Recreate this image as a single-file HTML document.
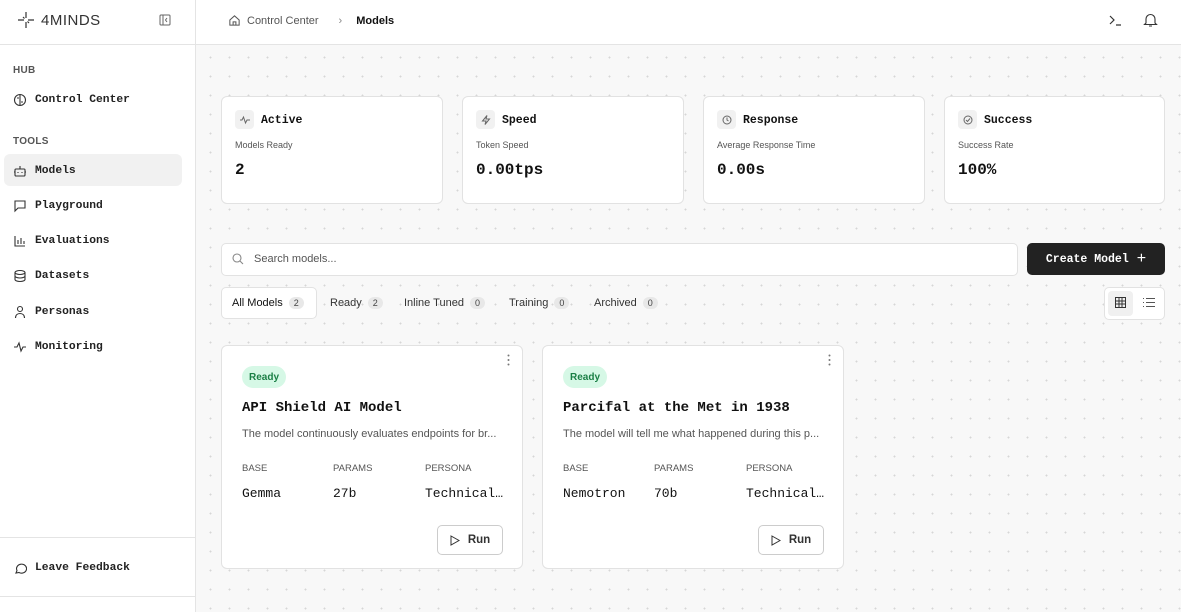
<!DOCTYPE html>
<html><head><meta charset="utf-8"><style>
*{box-sizing:border-box;margin:0;padding:0}
body{width:1181px;height:612px;overflow:hidden;font-family:"Liberation Sans",sans-serif;color:#111;background:#fff;position:relative}
.mono{font-family:"Liberation Mono",monospace}
.abs{position:absolute}
#side{left:0;top:0;width:196px;height:612px;border-right:1px solid #e4e4e4;background:#fff}
#main{left:196px;top:45px;width:985px;height:567px;background-color:#f8f8f8;background-image:radial-gradient(circle,#d6d6d6 0.8px,transparent 1.1px);background-size:19px 19px;background-position:5px 3px}
#hdr{left:196px;top:0;width:985px;height:45px;border-bottom:1px solid #e4e4e4;background:#fff}
.nav{position:absolute;left:13px;font-size:11.3px;font-weight:bold;color:#222;display:flex;align-items:center;gap:8px}
.nav svg{width:14px;height:14px}
.sec{position:absolute;left:13px;font-size:10px;font-weight:bold;color:#555;letter-spacing:.3px}
.card{position:absolute;background:#fff;border:1px solid #e2e2e2;border-radius:6px}
.stat .ic{position:absolute;left:13px;top:13px;width:19px;height:19px;border-radius:4px;background:#f1f1f1;display:flex;align-items:center;justify-content:center}
.stat .t{position:absolute;left:39px;top:17px;font-size:11.5px;font-weight:bold}
.stat .s{position:absolute;left:13px;top:43px;font-size:9px;color:#555}
.stat .v{position:absolute;left:13px;top:64px;font-size:16px;font-weight:bold}
.tab{position:absolute;top:297px;font-size:11px;color:#333;display:flex;align-items:center;gap:6px}
.badge{display:inline-block;background:#e8e8e8;border-radius:7px;font-size:9px;padding:1px 5px;color:#444}
.mc .rd{position:absolute;left:20px;top:20px;height:22px;width:44px;border-radius:11px;background:#d6f8e6;color:#1a7f45;font-size:10px;font-weight:bold;display:flex;align-items:center;justify-content:center}
.mc .tt{position:absolute;left:20px;top:54px;font-size:14px;font-weight:bold;white-space:nowrap}
.mc .d{position:absolute;left:20px;top:82px;font-size:11px;color:#555;white-space:nowrap}
.mc .l{position:absolute;top:117px;font-size:9.5px;color:#555}
.mc .val{position:absolute;top:140px;font-size:13px;white-space:nowrap}
.mc .run{position:absolute;left:215px;top:179px;width:66px;height:30px;border:1px solid #ccc;border-radius:5px;font-size:11.5px;font-weight:bold;display:flex;align-items:center;justify-content:center;gap:8px;color:#333}
.mc .dots{position:absolute;right:12px;top:8px;width:3px}
</style></head><body>
<div id="side" class="abs">
  <div class="abs" style="left:17px;top:11px;display:flex;align-items:center;gap:6px">
    <svg width="18" height="18" viewBox="0 0 18 18" fill="none" stroke="#333" stroke-width="1.2"><path d="M9 1v6M9 11v6M1 9h6M11 9h6M6 6l1.5 1.5M12 12l-1.5-1.5"/></svg>
    <span style="font-size:15px;color:#333;letter-spacing:.5px">4MINDS</span>
  </div>
  <svg class="abs" style="left:159px;top:14px" width="12" height="12" viewBox="0 0 12 12" fill="none" stroke="#666" stroke-width="1"><rect x="1" y="1" width="10" height="10" rx="1"/><path d="M4 1v10M8 4L6.5 6 8 8"/></svg>
  <div class="abs" style="left:0;top:44px;width:195px;border-top:1px solid #e4e4e4"></div>
  <div class="sec" style="top:65px">HUB</div>
  <div class="nav mono" style="top:93px"><svg viewBox="0 0 14 14" fill="none" stroke="#333" stroke-width="1.1"><circle cx="7" cy="7" r="5.5"/><path d="M7 1.5v11M4 5h2M8 9h2"/></svg>Control Center</div>
  <div class="sec" style="top:136px">TOOLS</div>
  <div class="abs" style="left:4px;top:154px;width:178px;height:32px;background:#f1f1f1;border-radius:6px"></div>
  <div class="nav mono" style="top:164px"><svg viewBox="0 0 14 14" fill="none" stroke="#333" stroke-width="1.1"><rect x="2" y="5" width="10" height="7" rx="1"/><path d="M7 2v3M1 8h1M12 8h1M5 8v1M9 8v1"/></svg>Models</div>
  <div class="nav mono" style="top:199px"><svg viewBox="0 0 14 14" fill="none" stroke="#333" stroke-width="1.1"><path d="M2 2h10v7H5l-3 3z"/></svg>Playground</div>
  <div class="nav mono" style="top:234px"><svg viewBox="0 0 14 14" fill="none" stroke="#333" stroke-width="1.1"><path d="M2 2v10h10M5 10V6M8 10V4M11 10V7"/></svg>Evaluations</div>
  <div class="nav mono" style="top:269px"><svg viewBox="0 0 14 14" fill="none" stroke="#333" stroke-width="1.1"><ellipse cx="7" cy="3.5" rx="5" ry="2"/><path d="M2 3.5v7c0 1 2 2 5 2s5-1 5-2v-7M2 7c0 1 2 2 5 2s5-1 5-2"/></svg>Datasets</div>
  <div class="nav mono" style="top:305px"><svg viewBox="0 0 14 14" fill="none" stroke="#333" stroke-width="1.1"><circle cx="7" cy="4" r="2.5"/><path d="M2.5 13c0-3 2-4.5 4.5-4.5s4.5 1.5 4.5 4.5"/></svg>Personas</div>
  <div class="nav mono" style="top:340px"><svg viewBox="0 0 14 14" fill="none" stroke="#333" stroke-width="1.1"><path d="M1 7h3l2-4 2 8 2-4h3"/></svg>Monitoring</div>
  <div class="abs" style="left:0;top:537px;width:195px;border-top:1px solid #e4e4e4"></div>
  <div class="nav mono" style="top:561px"><svg viewBox="0 0 14 14" fill="none" stroke="#333" stroke-width="1.1"><path d="M3 12l1-2.5A5 4.5 0 1 1 6 11.5z"/></svg>Leave Feedback</div>
  <div class="abs" style="left:0;top:596px;width:195px;border-top:1px solid #e4e4e4"></div>
</div>
<div id="hdr" class="abs">
  <div class="abs" style="left:32px;top:14px;display:flex;align-items:center;font-size:11px;color:#555">
    <svg width="13" height="13" viewBox="0 0 14 14" fill="none" stroke="#555" stroke-width="1.1" style="margin-right:6px"><path d="M2 6.5L7 2l5 4.5V12H2z M5.5 12V8.5h3V12"/></svg>Control Center
    <span style="margin:0 14px 0 20px;color:#888">›</span><span style="color:#111;font-weight:bold">Models</span>
  </div>
  <svg class="abs" style="left:912px;top:13px" width="15" height="15" viewBox="0 0 15 15" fill="none" stroke="#333" stroke-width="1.2"><path d="M2 3l4 4-4 4M8 12h5"/></svg>
  <svg class="abs" style="left:947px;top:12px" width="15" height="16" viewBox="0 0 15 16" fill="none" stroke="#333" stroke-width="1.1"><path d="M3 11V7a4.5 4.5 0 0 1 9 0v4l1.5 1.5h-12zM6 14h3"/></svg>
</div>
<div id="main" class="abs"></div>

<div class="card stat" style="left:221px;top:96px;width:222px;height:108px"><div class="ic"><svg width="10" height="10" viewBox="0 0 10 10" fill="none" stroke="#666"><path d="M0 5h2l1.5-3 2 6 1.5-3h3"/></svg></div><div class="t mono">Active</div><div class="s">Models Ready</div><div class="v mono">2</div></div>
<div class="card stat" style="left:462px;top:96px;width:222px;height:108px"><div class="ic"><svg width="10" height="10" viewBox="0 0 10 10" fill="none" stroke="#666"><path d="M6 0.5L1.5 6h3.5L4 9.5 8.5 4H5z"/></svg></div><div class="t mono">Speed</div><div class="s">Token Speed</div><div class="v mono">0.00tps</div></div>
<div class="card stat" style="left:703px;top:96px;width:222px;height:108px"><div class="ic"><svg width="10" height="10" viewBox="0 0 10 10" fill="none" stroke="#666"><circle cx="5" cy="5" r="4"/><path d="M5 2.5V5l1.5 1"/></svg></div><div class="t mono">Response</div><div class="s">Average Response Time</div><div class="v mono">0.00s</div></div>
<div class="card stat" style="left:944px;top:96px;width:221px;height:108px"><div class="ic"><svg width="10" height="10" viewBox="0 0 10 10" fill="none" stroke="#666"><circle cx="5" cy="5" r="4"/><path d="M3 5l1.5 1.5L7 3.5"/></svg></div><div class="t mono">Success</div><div class="s">Success Rate</div><div class="v mono">100%</div></div>

<div class="card" style="left:221px;top:243px;width:797px;height:33px;border-radius:5px"></div>
<svg class="abs" style="left:232px;top:253px" width="12" height="12" viewBox="0 0 12 12" fill="none" stroke="#888" stroke-width="1.1"><circle cx="5" cy="5" r="4"/><path d="M8 8l3 3"/></svg>
<div class="abs" style="left:254px;top:253px;font-size:11px;color:#555">Search models...</div>
<div class="abs mono" style="left:1027px;top:243px;width:138px;height:32px;background:#222;border-radius:5px;color:#fff;font-size:11.5px;font-weight:bold;display:flex;align-items:center;justify-content:center;gap:8px">Create Model <span style="font-size:16px;font-weight:normal;font-family:'Liberation Sans'">+</span></div>

<div class="card" style="left:221px;top:287px;width:96px;height:32px;border-radius:5px"></div>
<div class="tab" style="left:232px;color:#111">All Models <span class="badge">2</span></div>
<div class="tab" style="left:330px">Ready <span class="badge">2</span></div>
<div class="tab" style="left:404px">Inline Tuned <span class="badge">0</span></div>
<div class="tab" style="left:509px">Training <span class="badge">0</span></div>
<div class="tab" style="left:594px">Archived <span class="badge">0</span></div>
<div class="card" style="left:1104px;top:287px;width:61px;height:33px;border-radius:5px"><div class="abs" style="left:3px;top:3px;width:25px;height:25px;background:#f0f0f0;border-radius:4px"></div>
<svg class="abs" style="left:10px;top:9px" width="11" height="11" viewBox="0 0 11 11" fill="none" stroke="#333" stroke-width="1"><rect x=".5" y=".5" width="10" height="10"/><path d="M4 .5v10M7 .5v10M.5 4h10M.5 7h10"/></svg>
<svg class="abs" style="left:38px;top:9px" width="12" height="11" viewBox="0 0 12 11" fill="none" stroke="#555" stroke-width="1"><path d="M0 1.5h1M0 5.5h1M0 9.5h1M3 1.5h9M3 5.5h9M3 9.5h9"/></svg></div>

<div class="card mc" style="left:221px;top:345px;width:302px;height:224px">
 <svg class="dots" viewBox="0 0 3 12" height="12" fill="#777"><circle cx="1.5" cy="1.5" r="1"/><circle cx="1.5" cy="6" r="1"/><circle cx="1.5" cy="10.5" r="1"/></svg>
 <div class="rd">Ready</div><div class="tt mono">API Shield AI Model</div>
 <div class="d">The model continuously evaluates endpoints for br...</div>
 <div class="l" style="left:20px">BASE</div><div class="l" style="left:111px">PARAMS</div><div class="l" style="left:203px">PERSONA</div>
 <div class="val mono" style="left:20px">Gemma</div><div class="val mono" style="left:111px">27b</div><div class="val mono" style="left:203px">Technical…</div>
 <div class="run"><svg width="10" height="11" viewBox="0 0 10 11" fill="none" stroke="#333"><path d="M1 1l8 4.5-8 4.5z"/></svg>Run</div>
</div>
<div class="card mc" style="left:542px;top:345px;width:302px;height:224px">
 <svg class="dots" viewBox="0 0 3 12" height="12" fill="#777"><circle cx="1.5" cy="1.5" r="1"/><circle cx="1.5" cy="6" r="1"/><circle cx="1.5" cy="10.5" r="1"/></svg>
 <div class="rd">Ready</div><div class="tt mono">Parcifal at the Met in 1938</div>
 <div class="d">The model will tell me what happened during this p...</div>
 <div class="l" style="left:20px">BASE</div><div class="l" style="left:111px">PARAMS</div><div class="l" style="left:203px">PERSONA</div>
 <div class="val mono" style="left:20px">Nemotron</div><div class="val mono" style="left:111px">70b</div><div class="val mono" style="left:203px">Technical…</div>
 <div class="run"><svg width="10" height="11" viewBox="0 0 10 11" fill="none" stroke="#333"><path d="M1 1l8 4.5-8 4.5z"/></svg>Run</div>
</div>
</body></html>
